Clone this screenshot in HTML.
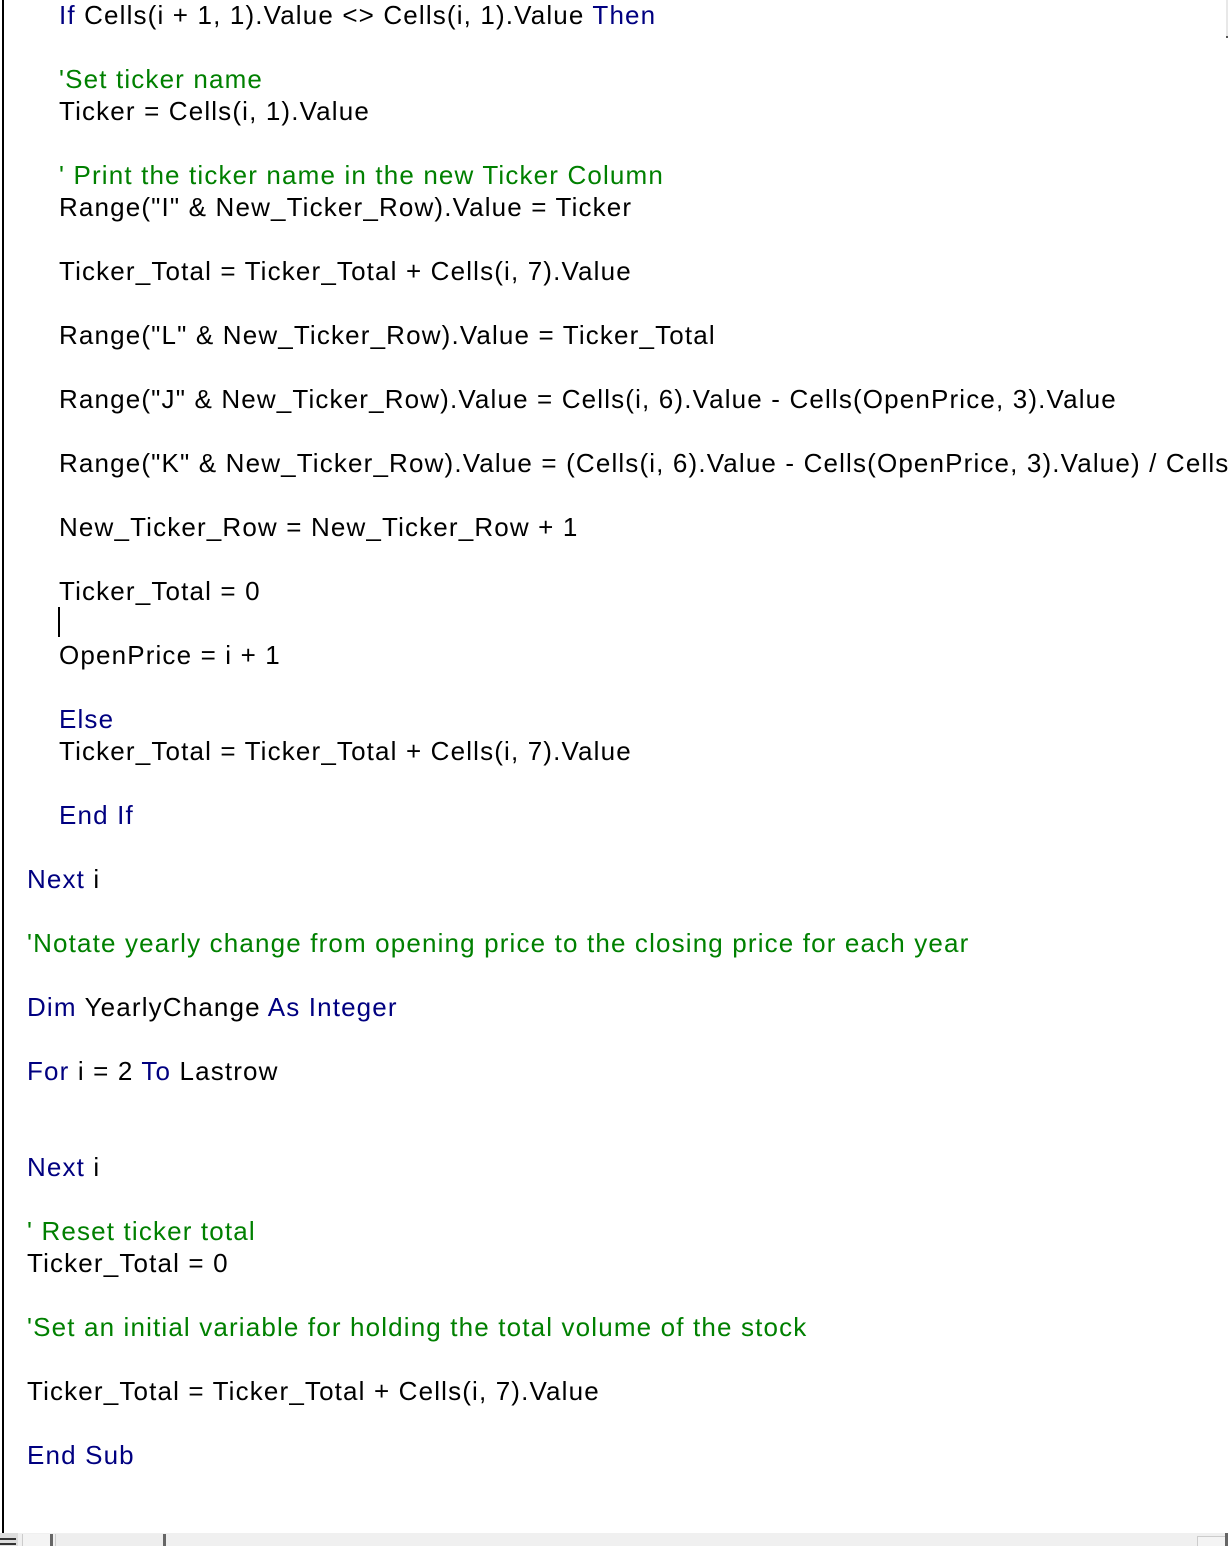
<!DOCTYPE html>
<html><head><style>
html,body{margin:0;padding:0;width:1228px;height:1546px;overflow:hidden;background:#fff;position:relative}
.l{position:absolute;white-space:pre;overflow:hidden;font-family:"Liberation Sans",sans-serif;font-size:26px;line-height:32px;height:32px;color:#000;letter-spacing:1.15px}
.k{color:#000080}.c{color:#008000}
.a{left:59px;width:1169px}.b{left:27px;width:1190px}
</style></head><body>
<div style="position:absolute;left:2px;top:0;width:2px;height:1533px;background:#000"></div>
<div style="position:absolute;left:1226px;top:0;width:2px;height:36px;background:#e8e8e8"></div>
<div style="position:absolute;left:1226px;top:36px;width:2px;height:2px;background:#555"></div>
<div style="position:absolute;left:0;top:1533px;width:1228px;height:13px;background:#f0f0f0"></div>
<div style="position:absolute;left:0;top:1533px;width:18px;height:13px;background:#ddd"></div>
<div style="position:absolute;left:0;top:1538px;width:16px;height:2px;background:#333"></div>
<div style="position:absolute;left:0;top:1543px;width:16px;height:2px;background:#333"></div>
<div style="position:absolute;left:22px;top:1534px;width:28px;height:12px;background:#f4f4f4;border-left:1px solid #ccc"></div>
<div style="position:absolute;left:50px;top:1534px;width:3px;height:12px;background:#666"></div>
<div style="position:absolute;left:55px;top:1534px;width:108px;height:12px;background:#eee;border-left:1px solid #ccc"></div>
<div style="position:absolute;left:163px;top:1534px;width:3px;height:12px;background:#666"></div>
<div style="position:absolute;left:1197px;top:1536px;width:27px;height:9px;background:#f4f4f4;border:1px solid #ccc"></div>
<div style="position:absolute;left:1225px;top:1533px;width:3px;height:13px;background:#666"></div>
<div style="position:absolute;left:58px;top:607px;width:2px;height:30px;background:#000"></div>

<div class="l a" style="top:-1px"><span class="k">If</span> Cells(i + 1, 1).Value &lt;&gt; Cells(i, 1).Value <span class="k">Then</span></div>
<div class="l a c" style="top:63px">'Set ticker name</div>
<div class="l a" style="top:95px">Ticker = Cells(i, 1).Value</div>
<div class="l a c" style="top:159px">' Print the ticker name in the new Ticker Column</div>
<div class="l a" style="top:191px">Range("I" &amp; New_Ticker_Row).Value = Ticker</div>
<div class="l a" style="top:255px">Ticker_Total = Ticker_Total + Cells(i, 7).Value</div>
<div class="l a" style="top:319px">Range("L" &amp; New_Ticker_Row).Value = Ticker_Total</div>
<div class="l a" style="top:383px">Range("J" &amp; New_Ticker_Row).Value = Cells(i, 6).Value - Cells(OpenPrice, 3).Value</div>
<div class="l a" style="top:447px">Range("K" &amp; New_Ticker_Row).Value = (Cells(i, 6).Value - Cells(OpenPrice, 3).Value) / Cells(OpenPrice, 3).Value</div>
<div class="l a" style="top:511px">New_Ticker_Row = New_Ticker_Row + 1</div>
<div class="l a" style="top:575px">Ticker_Total = 0</div>
<div class="l a" style="top:639px">OpenPrice = i + 1</div>
<div class="l a k" style="top:703px">Else</div>
<div class="l a" style="top:735px">Ticker_Total = Ticker_Total + Cells(i, 7).Value</div>
<div class="l a k" style="top:799px">End If</div>
<div class="l b" style="top:863px"><span class="k">Next</span> i</div>
<div class="l b c" style="top:927px">'Notate yearly change from opening price to the closing price for each year</div>
<div class="l b" style="top:991px"><span class="k">Dim</span> YearlyChange <span class="k">As Integer</span></div>
<div class="l b" style="top:1055px"><span class="k">For</span> i = 2 <span class="k">To</span> Lastrow</div>
<div class="l b" style="top:1151px"><span class="k">Next</span> i</div>
<div class="l b c" style="top:1215px">' Reset ticker total</div>
<div class="l b" style="top:1247px">Ticker_Total = 0</div>
<div class="l b c" style="top:1311px">'Set an initial variable for holding the total volume of the stock</div>
<div class="l b" style="top:1375px">Ticker_Total = Ticker_Total + Cells(i, 7).Value</div>
<div class="l b k" style="top:1439px">End Sub</div>
</body></html>
